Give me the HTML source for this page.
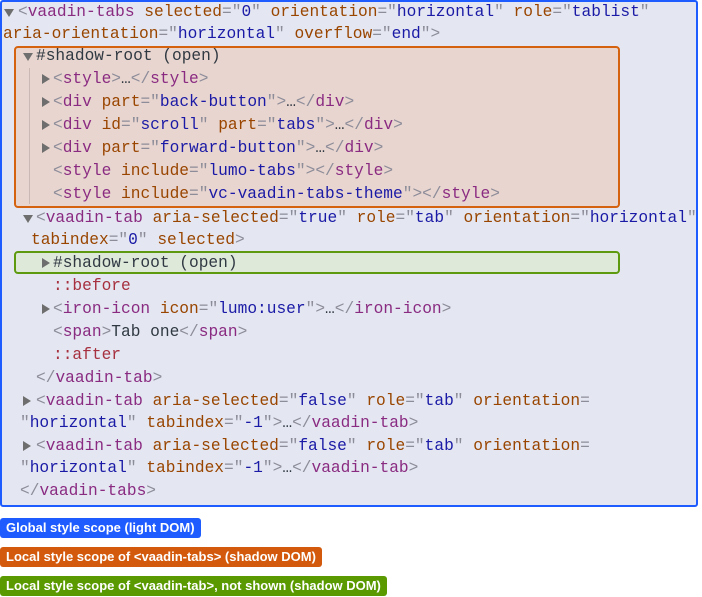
<!DOCTYPE html>
<html><head><meta charset="utf-8"><style>
body{margin:0;width:702px;height:597px;background:#fff;position:relative;overflow:hidden;font-family:"Liberation Mono",monospace;}
#main{position:absolute;left:0;top:0;width:694px;height:503px;border:2px solid #1f5cff;border-radius:3px;background:#e4e7f1;}
.box{position:absolute;border:2px solid;border-radius:4px;}
.l{position:absolute;font-size:16.2px;line-height:20px;white-space:pre;color:#303942;}
.t{color:#8a2b82}.a{color:#994500}.v{color:#1a1aa6}.g{color:#8d8d9a}.p{color:#a6303f}
.tri{position:absolute;width:0;height:0;}
.dn{border-left:5px solid transparent;border-right:5px solid transparent;border-top:8px solid #6e6e6e;}
.rt{border-top:5px solid transparent;border-bottom:5px solid transparent;border-left:8px solid #6e6e6e;}
.lab{position:absolute;left:0;height:20px;border-radius:3px;color:#fff;font:bold 13px "Liberation Sans",sans-serif;line-height:20px;padding:0 6px;}
.vl{position:absolute;width:1px;background:#c9b8b3;}
</style></head><body>
<div id="main"></div>
<div class="box" style="left:14px;top:46px;width:602px;height:158px;border-color:#d4620f;background:#e9d5cf"></div>
<div class="vl" style="left:29px;top:68px;height:136px"></div>
<div class="box" style="left:14px;top:251px;width:602px;height:19px;border-color:#5e9a10;background:#dfe9da"></div>

<div class="tri dn" style="left:4px;top:9px"></div>
<div class="l" style="left:18px;top:2px"><span class="g">&lt;</span><span class="t">vaadin-tabs</span> <span class="a">selected</span><span class="g">="</span><span class="v">0</span><span class="g">"</span> <span class="a">orientation</span><span class="g">="</span><span class="v">horizontal</span><span class="g">"</span> <span class="a">role</span><span class="g">="</span><span class="v">tablist</span><span class="g">"</span></div>
<div class="l" style="left:3px;top:24px"><span class="a">aria-orientation</span><span class="g">="</span><span class="v">horizontal</span><span class="g">"</span> <span class="a">overflow</span><span class="g">="</span><span class="v">end</span><span class="g">"&gt;</span></div>
<div class="tri dn" style="left:23px;top:53px"></div>
<div class="l" style="left:36px;top:46px">#shadow-root (open)</div>
<div class="tri rt" style="left:42px;top:74px"></div>
<div class="l" style="left:53px;top:69px"><span class="g">&lt;</span><span class="t">style</span><span class="g">&gt;</span>…<span class="g">&lt;/</span><span class="t">style</span><span class="g">&gt;</span></div>
<div class="tri rt" style="left:42px;top:97px"></div>
<div class="l" style="left:53px;top:92px"><span class="g">&lt;</span><span class="t">div</span> <span class="a">part</span><span class="g">="</span><span class="v">back-button</span><span class="g">"&gt;</span>…<span class="g">&lt;/</span><span class="t">div</span><span class="g">&gt;</span></div>
<div class="tri rt" style="left:42px;top:120px"></div>
<div class="l" style="left:53px;top:115px"><span class="g">&lt;</span><span class="t">div</span> <span class="a">id</span><span class="g">="</span><span class="v">scroll</span><span class="g">"</span> <span class="a">part</span><span class="g">="</span><span class="v">tabs</span><span class="g">"&gt;</span>…<span class="g">&lt;/</span><span class="t">div</span><span class="g">&gt;</span></div>
<div class="tri rt" style="left:42px;top:143px"></div>
<div class="l" style="left:53px;top:138px"><span class="g">&lt;</span><span class="t">div</span> <span class="a">part</span><span class="g">="</span><span class="v">forward-button</span><span class="g">"&gt;</span>…<span class="g">&lt;/</span><span class="t">div</span><span class="g">&gt;</span></div>
<div class="l" style="left:53px;top:161px"><span class="g">&lt;</span><span class="t">style</span> <span class="a">include</span><span class="g">="</span><span class="v">lumo-tabs</span><span class="g">"&gt;&lt;/</span><span class="t">style</span><span class="g">&gt;</span></div>
<div class="l" style="left:53px;top:184px"><span class="g">&lt;</span><span class="t">style</span> <span class="a">include</span><span class="g">="</span><span class="v">vc-vaadin-tabs-theme</span><span class="g">"&gt;&lt;/</span><span class="t">style</span><span class="g">&gt;</span></div>
<div class="tri dn" style="left:23px;top:215px"></div>
<div class="l" style="left:36px;top:208px"><span class="g">&lt;</span><span class="t">vaadin-tab</span> <span class="a">aria-selected</span><span class="g">="</span><span class="v">true</span><span class="g">"</span> <span class="a">role</span><span class="g">="</span><span class="v">tab</span><span class="g">"</span> <span class="a">orientation</span><span class="g">="</span><span class="v">horizontal</span><span class="g">"</span></div>
<div class="l" style="left:31px;top:230px"><span class="a">tabindex</span><span class="g">="</span><span class="v">0</span><span class="g">"</span> <span class="a">selected</span><span class="g">&gt;</span></div>
<div class="tri rt" style="left:42px;top:258px"></div>
<div class="l" style="left:53px;top:253px">#shadow-root (open)</div>
<div class="l" style="left:53px;top:276px"><span class="p">::before</span></div>
<div class="tri rt" style="left:42px;top:304px"></div>
<div class="l" style="left:53px;top:299px"><span class="g">&lt;</span><span class="t">iron-icon</span> <span class="a">icon</span><span class="g">="</span><span class="v">lumo:user</span><span class="g">"&gt;</span>…<span class="g">&lt;/</span><span class="t">iron-icon</span><span class="g">&gt;</span></div>
<div class="l" style="left:53px;top:322px"><span class="g">&lt;</span><span class="t">span</span><span class="g">&gt;</span>Tab one<span class="g">&lt;/</span><span class="t">span</span><span class="g">&gt;</span></div>
<div class="l" style="left:53px;top:345px"><span class="p">::after</span></div>
<div class="l" style="left:36px;top:368px"><span class="g">&lt;/</span><span class="t">vaadin-tab</span><span class="g">&gt;</span></div>
<div class="tri rt" style="left:23px;top:396px"></div>
<div class="l" style="left:36px;top:391px"><span class="g">&lt;</span><span class="t">vaadin-tab</span> <span class="a">aria-selected</span><span class="g">="</span><span class="v">false</span><span class="g">"</span> <span class="a">role</span><span class="g">="</span><span class="v">tab</span><span class="g">"</span> <span class="a">orientation</span><span class="g">=</span></div>
<div class="l" style="left:20px;top:413px"><span class="g">"</span><span class="v">horizontal</span><span class="g">"</span> <span class="a">tabindex</span><span class="g">="</span><span class="v">-1</span><span class="g">"&gt;</span>…<span class="g">&lt;/</span><span class="t">vaadin-tab</span><span class="g">&gt;</span></div>
<div class="tri rt" style="left:23px;top:441px"></div>
<div class="l" style="left:36px;top:436px"><span class="g">&lt;</span><span class="t">vaadin-tab</span> <span class="a">aria-selected</span><span class="g">="</span><span class="v">false</span><span class="g">"</span> <span class="a">role</span><span class="g">="</span><span class="v">tab</span><span class="g">"</span> <span class="a">orientation</span><span class="g">=</span></div>
<div class="l" style="left:20px;top:458px"><span class="g">"</span><span class="v">horizontal</span><span class="g">"</span> <span class="a">tabindex</span><span class="g">="</span><span class="v">-1</span><span class="g">"&gt;</span>…<span class="g">&lt;/</span><span class="t">vaadin-tab</span><span class="g">&gt;</span></div>
<div class="l" style="left:20px;top:481px"><span class="g">&lt;/</span><span class="t">vaadin-tabs</span><span class="g">&gt;</span></div>

<div class="lab" style="top:518px;background:#1f5cff">Global style scope (light DOM)</div>
<div class="lab" style="top:547px;background:#d35a0c">Local style scope of &lt;vaadin-tabs&gt; (shadow DOM)</div>
<div class="lab" style="top:576px;background:#5a9a00">Local style scope of &lt;vaadin-tab&gt;, not shown (shadow DOM)</div>
</body></html>
